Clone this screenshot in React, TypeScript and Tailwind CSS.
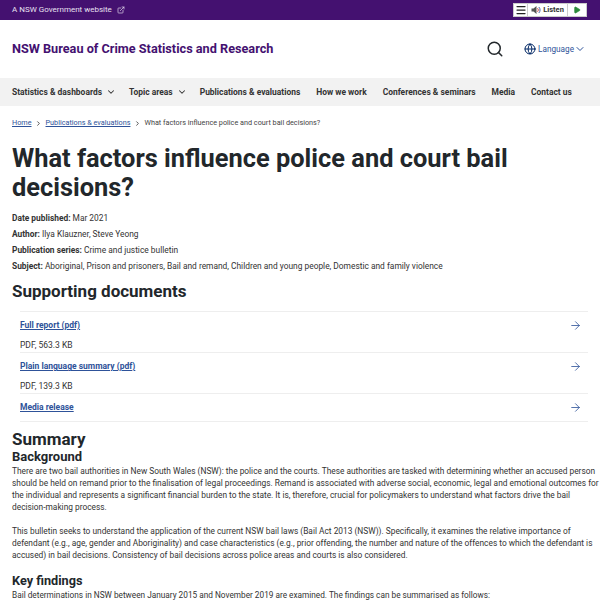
import React from 'react'
import { ChevronDown, ExternalLink, Search, Globe, ChevronRight, ArrowRight, Menu, Play } from 'lucide-react'

const navItems = [
  { label: 'Statistics & dashboards', chevron: true },
  { label: 'Topic areas', chevron: true },
  { label: 'Publications & evaluations' },
  { label: 'How we work' },
  { label: 'Conferences & seminars' },
  { label: 'Media' },
  { label: 'Contact us' },
]

const docs = [
  { title: 'Full report (pdf)', meta: 'PDF, 563.3 KB' },
  { title: 'Plain language summary (pdf)', meta: 'PDF, 139.3 KB' },
  { title: 'Media release' },
]

function Listen() {
  return (
    <div className="flex h-[14px] mb-[1px] bg-white border border-[#ccc] text-[7.5px] font-bold text-[#333]">
      <div className="w-[14px] flex items-center justify-center border-r border-[#ccc]">
        <Menu size={12} strokeWidth={2.5} className="text-[#222]" />
      </div>
      <div className="w-[40px] flex items-center justify-center gap-[2px] border-r border-[#ccc]">
        <svg width="10" height="10" viewBox="0 0 10 10" fill="none">
          <path d="M0.5 3.5h2L5.5 1v8L2.5 6.5h-2z" fill="#555" />
          <path d="M6.5 3.2a2.5 2.5 0 0 1 0 3.6" stroke="#d2504a" />
          <path d="M7.8 2a4.2 4.2 0 0 1 0 6" stroke="#4b5fa8" />
        </svg>
        <span>Listen</span>
      </div>
      <div className="w-[18px] flex items-center justify-center">
        <Play size={8} className="text-[#2e8b3d] fill-[#2e8b3d]" />
      </div>
    </div>
  )
}

export default function App() {
  return (
    <div className="w-[600px] h-[600px] overflow-hidden bg-white text-[#22272b] font-['Roboto','Liberation_Sans',sans-serif]">
      <div className="h-5 bg-[#441170] flex items-center justify-between pl-3 pr-[13px]">
        <div className="flex items-center gap-[5px] text-[8px] text-[#e8e0f0]">
          A NSW Government website
          <ExternalLink size={8} />
        </div>
        <Listen />
      </div>

      <header className="h-[58px] flex items-center justify-between pl-3 pr-[14px]">
        <div className="text-[12.7px] font-bold text-[#441170]">NSW Bureau of Crime Statistics and Research</div>
        <div className="flex items-center">
          <Search size={18} strokeWidth={2} className="text-[#22272b] mr-5" />
          <Globe size={12} className="text-[#002664] mr-[2px]" />
          <span className="text-[8.2px] text-[#2e5299]">Language</span>
          <ChevronDown size={12} className="text-[#2e5299]" />
        </div>
      </header>

      <nav className="h-7 bg-[#f2f2f2] flex items-center pl-3 gap-4 text-[8.45px] font-bold text-[#333] whitespace-nowrap">
        {navItems.map((item) => (
          <div key={item.label} className="flex items-center gap-1">
            {item.label}
            {item.chevron ? <ChevronDown size={10} strokeWidth={2.5} className="-mr-[3px]" /> : null}
          </div>
        ))}
      </nav>

      <div className="flex items-center mt-[10px] h-[14px] pl-3 text-[7.25px] text-[#444]">
        <a className="underline text-[#2e5299]">Home</a>
        <ChevronRight size={7} strokeWidth={3} className="mx-[3.5px]" />
        <a className="underline text-[#2e5299]">Publications & evaluations</a>
        <ChevronRight size={7} strokeWidth={3} className="mx-[3.5px]" />
        What factors influence police and court bail decisions?
      </div>

      <main className="pl-3">
        <h1 className="mt-[14px] text-[25.4px] leading-[29px] font-bold w-[560px]">
          What factors influence police and court bail decisions?
        </h1>
        <div className="mt-2 text-[8.4px] leading-[16px] text-[#333]">
          <div><b>Date published:</b> Mar 2021</div>
          <div><b>Author:</b> Ilya Klauzner, Steve Yeong</div>
          <div><b>Publication series:</b> Crime and justice bulletin</div>
          <div><b>Subject:</b> Aboriginal, Prison and prisoners, Bail and remand, Children and young people, Domestic and family violence</div>
        </div>

        <h2 className="mt-[5px] text-[17px] leading-[24px] font-bold">Supporting documents</h2>

        <ul className="mt-2 ml-2 mr-[12px] border-t border-[#eee]">
          {docs.map((doc, idx) => (
            <li key={doc.title} className={idx < 2 ? 'border-b border-[#eee] pr-[6px]' : 'pr-[6px]'}>
              <div className="flex items-center justify-between h-[27px]">
                <a className="text-[8.5px] font-bold underline text-[#2e5299]">{doc.title}</a>
                <ArrowRight size={13} strokeWidth={1.5} className="text-[#2e5299]" />
              </div>
              {doc.meta ? <div className="h-[13px] text-[8.5px] leading-[13px] text-[#333]">{doc.meta}</div> : null}
            </li>
          ))}
          <li className="border-t border-[#eee]" />
        </ul>

        <h2 className="mt-[7px] text-[17px] leading-[20px] font-bold">Summary</h2>
        <h3 className="text-[13px] leading-[16px] font-bold">Background</h3>
        <p className="text-[8.35px] leading-[12px] text-[#333] whitespace-nowrap">
          There are two bail authorities in New South Wales (NSW): the police and the courts. These authorities are tasked with determining whether an accused person<br />
          should be held on remand prior to the finalisation of legal proceedings. Remand is associated with adverse social, economic, legal and emotional outcomes for<br />
          the individual and represents a significant financial burden to the state. It is, therefore, crucial for policymakers to understand what factors drive the bail<br />
          decision-making process.
        </p>
        <p className="mt-3 text-[8.35px] leading-[12px] text-[#333] whitespace-nowrap">
          This bulletin seeks to understand the application of the current NSW bail laws (Bail Act 2013 (NSW)). Specifically, it examines the relative importance of<br />
          defendant (e.g., age, gender and Aboriginality) and case characteristics (e.g., prior offending, the number and nature of the offences to which the defendant is<br />
          accused) in bail decisions. Consistency of bail decisions across police areas and courts is also considered.
        </p>
        <h3 className="mt-3 text-[12.7px] leading-[16px] font-bold">Key findings</h3>
        <p className="text-[8.25px] leading-[12px] text-[#333]">
          Bail determinations in NSW between January 2015 and November 2019 are examined. The findings can be summarised as follows:
        </p>
      </main>
    </div>
  )
}
